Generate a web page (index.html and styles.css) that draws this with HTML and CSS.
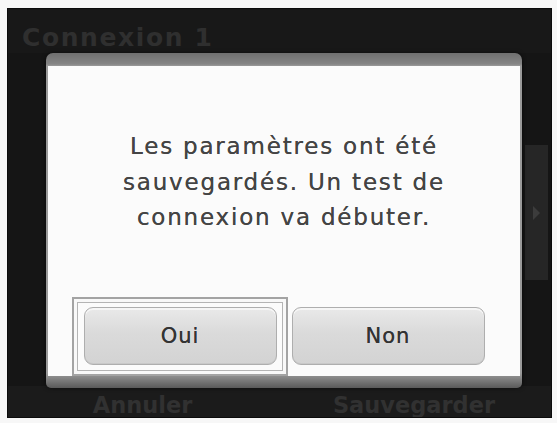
FILE: index.html
```html
<!DOCTYPE html>
<html lang="fr">
<head>
<meta charset="utf-8">
<title>Connexion 1</title>
<link rel="stylesheet" href="styles.css">
</head>
<body>
<div class="screen">
  <div class="titlebar">Connexion 1</div>
  <div class="middle">
    <div class="side-tab"><span class="side-arrow"></span></div>
  </div>
  <div class="bottombar">
    <span class="bb-btn bb-left">Annuler</span>
    <span class="bb-btn bb-right">Sauvegarder</span>
  </div>
  <div class="dialog">
    <div class="dialog-body">
      <p class="message">Les paramètres ont été<br>sauvegardés. Un test de<br>connexion va débuter.</p>
      <div class="buttons">
        <div class="btn-wrap focused">
          <div class="btn">Oui</div>
          <span class="focus-frame"></span>
        </div>
        <div class="btn-wrap">
          <div class="btn">Non</div>
        </div>
      </div>
    </div>
  </div>
</div>
</body>
</html>
```

FILE: styles.css
```css
html, body {
  margin: 0;
  padding: 0;
  background: #f7f7f7;
}
body {
  width: 557px;
  height: 423px;
  overflow: hidden;
  font-family: "DejaVu Sans", "Liberation Sans", sans-serif;
}
.screen {
  position: relative;
  margin: 8px 5px 0 7px;
  height: 410px;
  background: #151515;
  border: 1px solid #0c0c0c;
  box-sizing: border-box;
  display: flex;
  flex-direction: column;
}
.titlebar {
  height: 44px;
  box-sizing: border-box;
  padding: 16px 0 0 14px;
  font-weight: bold;
  font-size: 25px;
  line-height: 25px;
  letter-spacing: 1.6px;
  color: #2f2f2f;
  background: #181818;
}
.middle {
  flex: 1;
  display: flex;
  justify-content: flex-end;
  align-items: flex-start;
  padding: 92px 3px 0 0;
}
.side-tab {
  width: 23px;
  height: 135px;
  background: #262626;
  display: flex;
  align-items: center;
  justify-content: center;
}
.side-arrow {
  width: 0;
  height: 0;
  border-top: 7px solid transparent;
  border-bottom: 7px solid transparent;
  border-left: 7px solid #3c3c3c;
}
.bottombar {
  height: 31px;
  background: #1b1b1b;
  display: flex;
  align-items: flex-start;
  font-weight: bold;
  font-size: 22.5px;
  color: #313131;
  overflow: hidden;
}
.bb-btn {
  display: block;
  text-align: center;
  line-height: 22px;
  padding-top: 8px;
}
.bb-left {
  width: 270px;
}
.bb-right {
  width: 275px;
}
.dialog {
  position: absolute;
  left: 38px;
  top: 44px;
  width: 476px;
  height: 335px;
  box-sizing: border-box;
  padding: 13px 2px 12px 2px;
  border-radius: 7px 7px 5px 5px;
  background: linear-gradient(#6f6f6f 0, #858585 11px, #9a9a9a 13px, #9a9a9a 320px, #5a5a5a 335px);
  box-shadow: 0 0 4px rgba(0,0,0,0.6);
}
.dialog-body {
  height: 100%;
  box-sizing: border-box;
  background: #fbfbfb;
  display: flex;
  flex-direction: column;
  padding: 63px 0 11px 0;
}
.message {
  margin: 0;
  text-align: center;
  font-size: 23px;
  line-height: 35.5px;
  letter-spacing: 1.8px;
  color: #444;
  text-shadow: 0 0 0.6px #555;
}
.buttons {
  margin-top: auto;
  display: flex;
  justify-content: center;
  gap: 15px;
}
.btn-wrap {
  position: relative;
  width: 193px;
  height: 58px;
}
.btn {
  height: 100%;
  box-sizing: border-box;
  border: 1px solid #aeaeae;
  border-radius: 9px;
  background: linear-gradient(#e9e9e9, #dadada 45%, #d3d3d3);
  box-shadow: inset 0 2px 0 #f6f6f6, inset 0 -1px 0 #c8c8c8;
  display: flex;
  align-items: center;
  justify-content: center;
  font-size: 21px;
  letter-spacing: 1px;
  color: #333;
  text-shadow: 0 0 0.6px #444;
}
.focus-frame {
  position: absolute;
  left: -12px;
  right: -11px;
  top: -10px;
  bottom: -11px;
  border: 2px solid #a3a3a3;
  box-shadow: inset 0 0 0 3px #f8f8f8, inset 0 0 0 4px #b4b4b4;
}
```
